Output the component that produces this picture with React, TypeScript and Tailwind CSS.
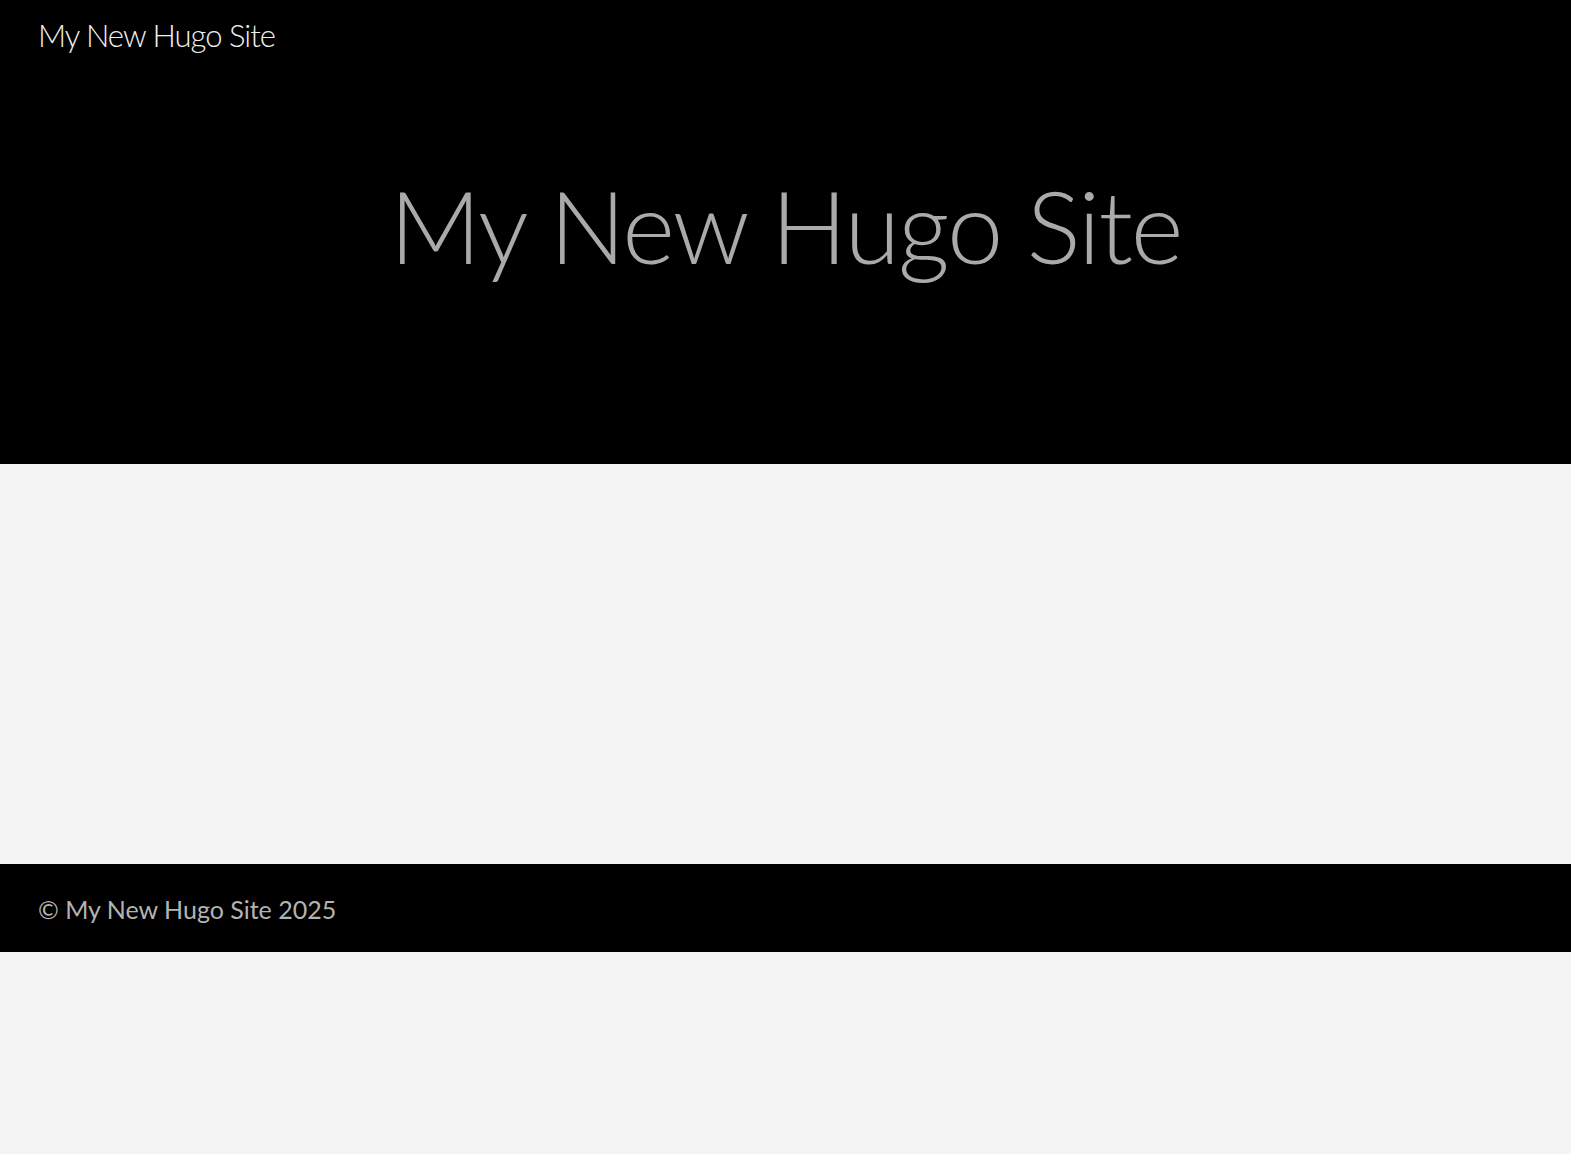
export default function App() {
  return (
    <div className="min-h-[1154px] bg-[#f4f4f4]" style={{ fontFamily: "Lato, 'Noto Sans', sans-serif" }}>
      <header className="h-[464px] bg-black flex flex-col">
        <nav className="pl-[38px] pt-[13px]">
          <a className="text-[31px] leading-[44px] font-light tracking-[-1px] text-[#f0f0f0]">My New Hugo Site</a>
        </nav>
        <div className="flex justify-center pt-[103px]">
          <h1 className="text-[101px] leading-[130px] font-light tracking-[-2px] text-[#aaaaaa]">My New Hugo Site</h1>
        </div>
      </header>
      <main className="h-[400px]"></main>
      <footer className="h-[88px] bg-black flex items-center pl-[38px] pt-[4px]">
        <span className="text-[25px] text-[#b3b3b3]">© My New Hugo Site 2025</span>
      </footer>
    </div>
  );
}
